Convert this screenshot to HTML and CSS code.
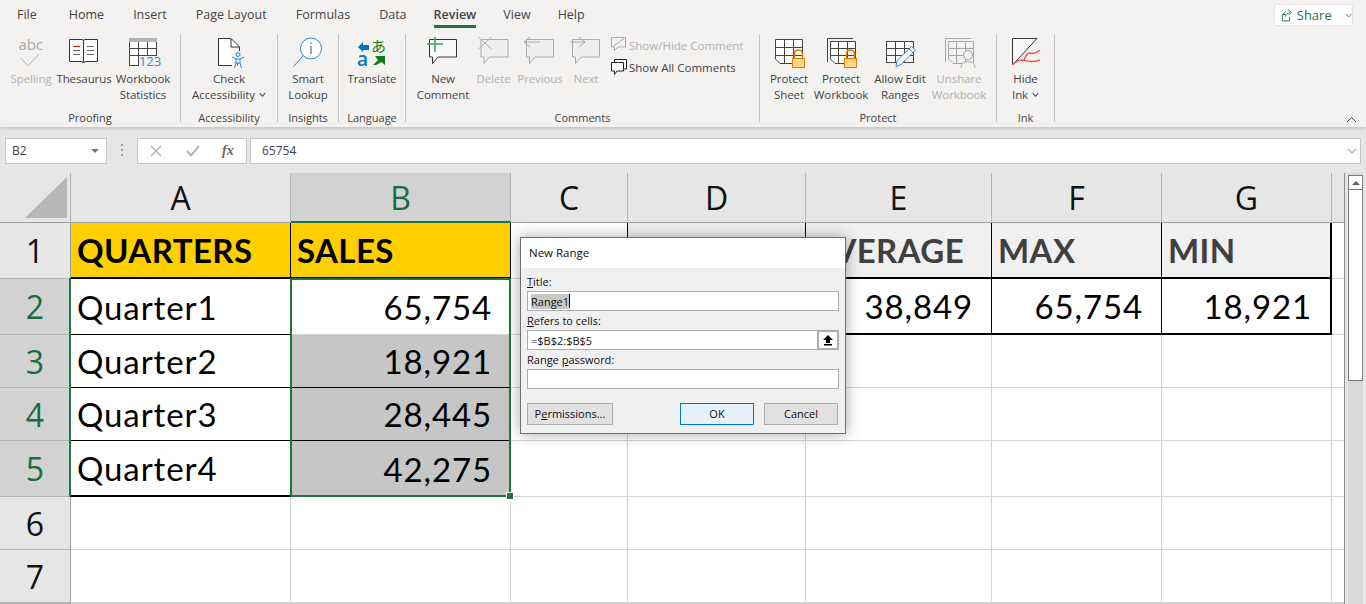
FILE: index.html
```html
<!DOCTYPE html>
<html lang="en">

<head>
	<meta charset="UTF-8">
	<title>Sales - Excel</title>
	<link rel="stylesheet" href="styles.css">
</head>

<body>

	<div class="ribbon">
		<div class="tabs">
			<span class="tab">File</span>
			<span class="tab">Home</span>
			<span class="tab">Insert</span>
			<span class="tab">Page Layout</span>
			<span class="tab">Formulas</span>
			<span class="tab">Data</span>
			<span class="tab active">Review</span>
			<span class="tab">View</span>
			<span class="tab">Help</span>
			<div class="share">
				<svg width="14" height="16" viewBox="0 0 14 16" fill="none" stroke="#217346">
					<path d="M1.5 7.5 H5 M9.5 10 V14.5 H1.5 V7.5 L5 4.5" />
					<path d="M5 10 C5 7 7 5.5 10 5.5 M8 2.5 L11.5 5 L8.5 8" />
				</svg>
				<span>Share</span>
				<svg class="share-caret" width="8" height="5" viewBox="0 0 8 5" fill="none" stroke="#217346">
					<path d="M1 1 L4 4 L7 1" />
				</svg>
			</div>
		</div>

		<div class="groups">
			<!-- Proofing -->
			<div class="group g-proofing">
				<div class="btns">
					<div class="btn off w50">
						<svg class="ico" viewBox="14 37 34 34" fill="none">
							<text x="18.5" y="50" class="ico-abc">abc</text>
							<path d="M21 58 L28 66 L39 54" stroke="#b5b5b5" />
						</svg>
						<span>Spelling</span>
					</div>
					<div class="btn w56">
						<svg class="ico" viewBox="67 37 34 34" fill="#fff" stroke="#333">
							<path d="M69.5 39.5 H82 Q83.5 39.5 83.5 41 V63 Q83 61.5 81 61.5 H69.5 Z" />
							<path d="M97.5 39.5 H85 Q83.5 39.5 83.5 41 V63 Q84 61.5 86 61.5 H97.5 Z" />
							<path d="M73 46.5 H80" stroke="#e81123" />
							<path d="M73 50.5 H80 M73 54.5 H80 M87 46.5 H94 M87 50.5 H94 M87 54.5 H94" stroke="#666" />
						</svg>
						<span>Thesaurus</span>
					</div>
					<div class="btn w62">
						<svg class="ico" viewBox="126 37 34 34" fill="none" stroke="#444">
							<rect x="129.5" y="38.5" width="27" height="27" fill="#fff" />
							<rect x="129" y="38" width="28" height="4" fill="#b3b3b3" stroke="none" />
							<path d="M138.5 42 V65 M147.5 42 V55 M130 48.5 H157 M130 55.5 H157" />
							<rect x="139" y="56" width="19" height="11" fill="#f3f2f1" stroke="none" />
							<text x="139" y="66" class="ico-num">123</text>
						</svg>
						<span>Workbook<br>Statistics</span>
					</div>
				</div>
				<div class="glabel">Proofing</div>
			</div>

			<!-- Accessibility -->
			<div class="group g-access">
				<div class="btns">
					<div class="btn grow">
						<svg class="ico" viewBox="212 37 34 34" fill="none" stroke="#333">
							<path d="M231 38.5 H218.5 V65.5 H232 M239.5 47 V51" fill="#fff" />
							<path d="M231 38.5 L239.5 47 H231 Z" fill="#fff" />
							<circle cx="238" cy="54.5" r="2" stroke="#2b88d8" />
							<path d="M232 57 L236 59 V63 L234.5 68 M244 57 L240 59 V63 L241.5 68 M236 59 H240 M236 63 H240 M237.5 63 V66" stroke="#2b88d8" />
						</svg>
						<span>Check<br>Accessibility <i class="caret"></i></span>
					</div>
				</div>
				<div class="glabel">Accessibility</div>
			</div>

			<!-- Insights -->
			<div class="group g-insights">
				<div class="btns">
					<div class="btn grow">
						<svg class="ico" viewBox="291 37 34 34" fill="none" stroke="#2b88d8">
							<circle cx="311" cy="48.5" r="10.5" fill="#fff" />
							<path d="M303 56 L293.5 66.5" />
							<path d="M311 46 V54 M311 42.5 V44" stroke="#444" />
						</svg>
						<span>Smart<br>Lookup</span>
					</div>
				</div>
				<div class="glabel">Insights</div>
			</div>

			<!-- Language -->
			<div class="group g-language">
				<div class="btns">
					<div class="btn grow">
						<svg class="ico" viewBox="355 37 34 34">
							<polygon points="358,47 363,42 363,45 369,45 369,50 363,50 363,52" fill="#0072c6" />
							<text x="357" y="65.5" class="ico-a">a</text>
							<text x="371" y="52" class="ico-kana">あ</text>
							<polygon points="385,56 385,65 381.5,62 376,65 373,65 378,60 375,56" fill="#107c10" />
						</svg>
						<span>Translate</span>
					</div>
				</div>
				<div class="glabel">Language</div>
			</div>

			<!-- Comments -->
			<div class="group g-comments">
				<div class="btns">
					<div class="btn w46">
						<svg class="ico" viewBox="426 37 34 34" fill="#fafafa" stroke="#333">
							<path d="M429.5 39.5 H456.5 V57 H438 L432.5 63.5 V57 H429.5 Z" />
							<path d="M427 44 H443 M435 37 V52" stroke="#2eaa5b" stroke-width="1.5" fill="none" />
						</svg>
						<span>New<br>Comment</span>
					</div>
					<div class="btn off w47">
						<svg class="ico" viewBox="476.5 37 34 34" fill="#efefef" stroke="#aaa">
							<path d="M480.5 39.5 H507.5 V57 H489 L483.5 63.5 V57 H480.5 Z" />
							<path d="M478 37 L491 49 M491 37 L478 49" fill="none" />
						</svg>
						<span>Delete</span>
					</div>
					<div class="btn off w46">
						<svg class="ico" viewBox="523 37 34 34" fill="#efefef" stroke="#aaa">
							<path d="M526.5 39.5 H553.5 V57 H535 L529.5 63.5 V57 H526.5 Z" />
							<path d="M524 42 H540 M530 37 L524 42 L530 47" fill="none" />
						</svg>
						<span>Previous</span>
					</div>
					<div class="btn off w46">
						<svg class="ico" viewBox="569 37 34 34" fill="#efefef" stroke="#aaa">
							<path d="M572.5 39.5 H599.5 V57 H581 L575.5 63.5 V57 H572.5 Z" />
							<path d="M570 42 H585 M579 37 L585 42 L579 47" fill="none" />
						</svg>
						<span>Next</span>
					</div>
					<div class="btn-list">
						<div class="btn-row off">
							<svg width="18" height="17" viewBox="610 37 18 17" fill="#f3f2f1" stroke="#aaa">
								<path d="M611.5 37.5 H625.5 V47 H618 L614.5 50.5 V47 H611.5 Z" />
								<path d="M613 46.5 L624 38.5" fill="none" />
							</svg>
							<span>Show/Hide Comment</span>
						</div>
						<div class="btn-row">
							<svg width="18" height="17" viewBox="609 59 18 17" fill="#fff" stroke="#222">
								<path d="M613.5 59.5 H625.5 V69 H613.5 Z" />
								<path d="M610.5 62.5 H622.5 V71 H616 L613.5 74.5 V71 H610.5 Z" />
							</svg>
							<span>Show All Comments</span>
						</div>
					</div>
				</div>
				<div class="glabel">Comments</div>
			</div>

			<!-- Protect -->
			<div class="group g-protect">
				<div class="btns">
					<div class="btn w50">
						<svg class="ico" viewBox="772 37 34 34" fill="none" stroke="#444">
							<path d="M775.5 39.5 H802.5 V63.5 H780 L775.5 59 Z" fill="#fff" />
							<path d="M784.5 40 V63 M793.5 40 V58 M776 47.5 H802 M776 55.5 H802" />
							<path d="M794.5 58 V54 C794.5 48.5 802.5 48.5 802.5 54 V58" stroke="#e07b00" stroke-width="1.5" />
							<rect x="792.5" y="58.5" width="12" height="9" fill="#fbd88a" stroke="#e07b00" />
						</svg>
						<span>Protect<br>Sheet</span>
					</div>
					<div class="btn w54">
						<svg class="ico" viewBox="824 37 34 34" fill="none" stroke="#444">
							<path d="M827.5 62 V38.5 H853" />
							<path d="M830.5 41.5 H855.5 V63.5 H835 L830.5 59 Z" fill="#fff" />
							<path d="M838.5 42 V63 M847.5 42 V58 M831 48.5 H855 M831 55.5 H855" />
							<path d="M846.5 58 V54 C846.5 48.5 854.5 48.5 854.5 54 V58" stroke="#e07b00" stroke-width="1.5" />
							<rect x="844.5" y="58.5" width="12" height="9" fill="#fbd88a" stroke="#e07b00" />
						</svg>
						<span>Protect<br>Workbook</span>
					</div>
					<div class="btn w64">
						<svg class="ico" viewBox="883 37 34 34" fill="none" stroke="#444">
							<rect x="886.5" y="41.5" width="27" height="21" fill="#fff" />
							<path d="M895.5 42 V62 M904.5 42 V62 M887 48.5 H913 M887 55.5 H913" />
							<path d="M896 66.5 L897 60.5 L911.5 46.5 L915.5 50 L901 64.5 Z" fill="#fff" stroke="#2b88d8" />
							<path d="M909 49 L913 52.5" stroke="#2b88d8" />
						</svg>
						<span>Allow Edit<br>Ranges</span>
					</div>
					<div class="btn off w54">
						<svg class="ico" viewBox="942 37 34 34" fill="none" stroke="#a6a6a6">
							<path d="M945.5 62 V38.5 H971" />
							<path d="M948.5 41.5 H973.5 V63.5 H953 L948.5 59 Z" />
							<path d="M956.5 42 V63 M965.5 42 V63 M949 48.5 H973 M949 55.5 H973" />
							<circle cx="968" cy="55" r="4.5" fill="#f3f2f1" />
							<path d="M961 67.5 C961 59.5 975 59.5 975 67.5" fill="#f3f2f1" />
						</svg>
						<span>Unshare<br>Workbook</span>
					</div>
				</div>
				<div class="glabel">Protect</div>
			</div>

			<!-- Ink -->
			<div class="group g-ink">
				<div class="btns">
					<div class="btn grow">
						<svg class="ico" viewBox="1009 37 34 34" fill="none">
							<path d="M1012.5 38.5 H1037 L1012.5 65 Z" fill="#f7f7f7" stroke="#333" />
							<path d="M1024 60 C1030 46 1030 59 1040 50" stroke="#f25555" stroke-width="1.5" />
							<path d="M1012 65 C1025 54 1025 66 1040 60" stroke="#f25555" stroke-width="1.5" />
						</svg>
						<span>Hide<br>Ink <i class="caret"></i></span>
					</div>
				</div>
				<div class="glabel">Ink</div>
			</div>
		</div>

		<svg class="collapse" width="11" height="7" viewBox="0 0 11 7" fill="none" stroke="#444">
			<path d="M1 6 L5.5 1.5 L10 6" />
		</svg>
	</div>

	<div class="formula-bar">
		<div class="name-box">
			<span>B2</span>
			<i class="name-arrow"></i>
		</div>
		<svg class="grip" width="4" height="14" viewBox="0 0 4 14" fill="#a6a6a6">
			<rect x="1" y="1" width="2" height="2" />
			<rect x="1" y="6" width="2" height="2" />
			<rect x="1" y="11" width="2" height="2" />
		</svg>
		<div class="fx-box">
			<svg width="12" height="12" viewBox="0 0 12 12" fill="none" stroke="#b4b4b4" stroke-width="1.5">
				<path d="M1 1 L11 11 M11 1 L1 11" />
			</svg>
			<svg width="14" height="12" viewBox="0 0 14 12" fill="none" stroke="#b4b4b4" stroke-width="2">
				<path d="M1 6 L5 10.5 L13 1" />
			</svg>
			<i class="fx">fx</i>
		</div>
		<div class="formula-input">
			<span>65754</span>
			<svg width="10" height="6" viewBox="0 0 10 6" fill="none" stroke="#b4b4b4" stroke-width="1.5">
				<path d="M1 1 L5 5 L9 1" />
			</svg>
		</div>
	</div>

	<div class="main">
		<div class="sheet">
			<!-- header row -->
			<div class="corner">
				<svg width="42" height="42" viewBox="0 0 42 42">
					<polygon points="0,41 42,0 42,41" fill="#b7b7b7" />
				</svg>
			</div>
			<div class="ch">A</div>
			<div class="ch sel">B</div>
			<div class="ch">C</div>
			<div class="ch">D</div>
			<div class="ch">E</div>
			<div class="ch">F</div>
			<div class="ch">G</div>
			<div class="ch-end"></div>

			<!-- row 1 -->
			<div class="rh">1</div>
			<div class="c head gold b-r b-bb">QUARTERS</div>
			<div class="c head gold b-r b-bb">SALES</div>
			<div class="c b-r"></div>
			<div class="c head pale b-r b-bb"></div>
			<div class="c head pale b-r b-bb">AVERAGE</div>
			<div class="c head pale b-r b-bb">MAX</div>
			<div class="c head pale b-rr b-bb">MIN</div>
			<div class="c"></div>

			<!-- row 2 -->
			<div class="rh sel">2</div>
			<div class="c b-r b-b">Quarter1</div>
			<div class="c num">65,754</div>
			<div class="c b-r"></div>
			<div class="c b-r b-bb"></div>
			<div class="c num b-r b-bb">38,849</div>
			<div class="c num b-r b-bb">65,754</div>
			<div class="c num b-rr b-bb">18,921</div>
			<div class="c"></div>

			<!-- row 3 -->
			<div class="rh sel">3</div>
			<div class="c b-r b-b">Quarter2</div>
			<div class="c num grey b-b">18,921</div>
			<div class="c"></div>
			<div class="c"></div>
			<div class="c"></div>
			<div class="c"></div>
			<div class="c"></div>
			<div class="c"></div>

			<!-- row 4 -->
			<div class="rh sel">4</div>
			<div class="c b-r b-b">Quarter3</div>
			<div class="c num grey b-b">28,445</div>
			<div class="c"></div>
			<div class="c"></div>
			<div class="c"></div>
			<div class="c"></div>
			<div class="c"></div>
			<div class="c"></div>

			<!-- row 5 -->
			<div class="rh sel">5</div>
			<div class="c b-r b-bb">Quarter4</div>
			<div class="c num grey">42,275</div>
			<div class="c"></div>
			<div class="c"></div>
			<div class="c"></div>
			<div class="c"></div>
			<div class="c"></div>
			<div class="c"></div>

			<!-- row 6 -->
			<div class="rh">6</div>
			<div class="c"></div>
			<div class="c"></div>
			<div class="c"></div>
			<div class="c"></div>
			<div class="c"></div>
			<div class="c"></div>
			<div class="c"></div>
			<div class="c"></div>

			<!-- row 7 -->
			<div class="rh">7</div>
			<div class="c"></div>
			<div class="c"></div>
			<div class="c"></div>
			<div class="c"></div>
			<div class="c"></div>
			<div class="c"></div>
			<div class="c"></div>
			<div class="c"></div>

			<!-- row 8, only its top shows -->
			<div class="rh"></div>
			<div class="c"></div>
			<div class="c"></div>
			<div class="c"></div>
			<div class="c"></div>
			<div class="c"></div>
			<div class="c"></div>
			<div class="c"></div>
			<div class="c"></div>

			<div class="selection"><i class="handle"></i></div>
			<div class="sel-rows"></div>
		</div>

		<div class="scrollbar">
			<div class="sb-btn"><i class="sb-arrow"></i></div>
			<div class="sb-thumb"></div>
		</div>
	</div>

	<div class="dialog">
		<div class="dlg-title">New Range</div>
		<div class="dlg-body">
			<label class="dlg-label"><u>T</u>itle:</label>
			<div class="dlg-input"><span class="hilite">Range1</span><i class="cursor"></i></div>
			<label class="dlg-label"><u>R</u>efers to cells:</label>
			<div class="dlg-input refers">
				<span>=$B$2:$B$5</span>
				<div class="pick">
					<svg width="12" height="12" viewBox="0 0 12 12">
						<path d="M6 1 L11 6 H8 V9 H4 V6 H1 Z M2 10 H10 V11.5 H2 Z" fill="#000" />
					</svg>
				</div>
			</div>
			<label class="dlg-label">Range <u>p</u>assword:</label>
			<div class="dlg-input"></div>
			<div class="dlg-actions">
				<div class="dlg-btn perm">P<u>e</u>rmissions...</div>
				<div class="dlg-btn ok">OK</div>
				<div class="dlg-btn cancel">Cancel</div>
			</div>
		</div>
	</div>

</body>

</html>
```

FILE: styles.css
```css
* {
	box-sizing: border-box;
}

html,
body {
	margin: 0;
	padding: 0;
	height: 604px;
	overflow: hidden;
}

body {
	font-family: 'Open Sans', 'Noto Sans', sans-serif;
	font-size: 11.5px;
	color: #444;
	background: #e6e6e6;
	position: relative;
}

/* ribbon */
.ribbon {
	position: relative;
	height: 127px;
	background: #f3f2f1;
	box-shadow: 0 1px 4px rgba(0, 0, 0, 0.2);
	z-index: 2;
}

.tabs {
	display: flex;
	height: 34px;
	padding-left: 17px;
	gap: 29px;
}

.tab {
	height: 28px;
	line-height: 30px;
	font-size: 12.5px;
	white-space: nowrap;
}

.tab:nth-child(2) {
	margin-left: 3px;
}

.tab:nth-child(7),
.tab:nth-child(8),
.tab:nth-child(9) {
	margin-left: -2px;
}

.tab.active {
	font-weight: 600;
	border-bottom: 3px solid #217346;
}

.share {
	display: flex;
	align-items: center;
	gap: 3px;
	height: 22px;
	width: 79px;
	margin: 4px 13px 0 auto;
	padding-left: 6px;
	background: #fff;
	border: 1px solid #e6e5e3;
	border-radius: 2px;
	color: #217346;
	font-size: 13px;
}

.share-caret {
	margin-left: 10px;
}

.groups {
	display: flex;
	height: 88px;
}

.group {
	display: flex;
	flex-direction: column;
	border-right: 1px solid #c8c6c4;
}

.g-proofing {
	width: 181px;
	padding-left: 6px;
}

.g-access {
	width: 97px;
}

.g-insights {
	width: 61px;
}

.g-language {
	width: 67px;
}

.g-comments {
	width: 354px;
	padding-left: 14px;
}

.g-protect {
	width: 237px;
	padding-left: 4px;
}

.g-ink {
	width: 58px;
}

.btns {
	display: flex;
	height: 76px;
	padding-top: 3px;
}

.btn {
	display: flex;
	flex-direction: column;
	align-items: center;
	text-align: center;
	line-height: 16px;
	letter-spacing: -0.1px;
	white-space: nowrap;
}

.btn span {
	display: block;
}

.ico {
	display: block;
	width: 34px;
	height: 34px;
	flex: none;
	overflow: visible;
}

.off {
	color: #b1b1b1;
}

.grow {
	flex: 1;
}

.w46 {
	width: 46px;
}

.w47 {
	width: 47px;
}

.w50 {
	width: 50px;
}

.w54 {
	width: 54px;
}

.w56 {
	width: 56px;
}

.w62 {
	width: 62px;
}

.w64 {
	width: 64px;
}

.g-comments .w46:first-child {
	margin-right: 4px;
}

.btn-list {
	display: flex;
	flex-direction: column;
	gap: 5px;
	margin-left: 1px;
}

.btn-row {
	display: flex;
	align-items: center;
	gap: 1px;
	height: 17px;
	white-space: nowrap;
}

.btn-row svg {
	flex: none;
}

.glabel {
	height: 12px;
	line-height: 16px;
	text-align: center;
	font-size: 11px;
	white-space: nowrap;
}

.g-proofing .glabel {
	margin-left: -6px;
}

.g-comments .glabel {
	margin-left: -14px;
}

.g-protect .glabel {
	margin-left: -4px;
}

.caret {
	display: inline-block;
	width: 5px;
	height: 5px;
	margin: 0 1px 3px 2px;
	border-right: 1px solid #444;
	border-bottom: 1px solid #444;
	transform: rotate(45deg) scale(0.9);
}

.ico-abc {
	font-size: 15px;
	fill: #a6a6a6;
	stroke: none;
}

.ico-num {
	font-size: 13px;
	fill: #2b88d8;
	stroke: none;
}

.ico-a {
	font-size: 19px;
	font-weight: 600;
	fill: #0072c6;
}

.ico-kana {
	font-family: 'Noto Sans CJK JP', sans-serif;
	font-size: 15px;
	fill: #107c10;
}

.collapse {
	position: absolute;
	right: 9px;
	bottom: 4px;
}

/* formula bar */
.formula-bar {
	display: flex;
	align-items: center;
	height: 46px;
	padding: 0 5px 0 5px;
	background: #e6e6e6;
}

.name-box,
.fx-box,
.formula-input {
	display: flex;
	align-items: center;
	height: 26px;
	background: #fff;
	border: 1px solid #c6c6c6;
	font-size: 12px;
	margin-top: 1px;
}

.name-box {
	width: 102px;
	padding: 0 6px;
	justify-content: space-between;
}

.name-arrow {
	width: 0;
	height: 0;
	margin-right: 1px;
	border-left: 4px solid transparent;
	border-right: 4px solid transparent;
	border-top: 4px solid #767676;
}

.grip {
	margin: 0 13px 0 13px;
}

.fx-box {
	width: 110px;
	padding-left: 12px;
}

.fx-box svg + svg {
	margin-left: 24px;
}

.fx {
	margin-left: 22px;
	font-family: 'Liberation Serif', serif;
	font-size: 14px;
	font-weight: 700;
	color: #666;
}

.formula-input {
	flex: 1;
	margin-left: 3px;
	padding: 0 3px 0 11px;
	justify-content: space-between;
}

/* sheet */
.main {
	display: flex;
	height: 431px;
}

.sheet {
	position: relative;
	flex: 1;
	display: grid;
	grid-template-columns: 71px 220px 220px 117px 178px 186px 170px 170px 13px;
	grid-template-rows: 50px 56px 56px 53px 53px 56px 53px 53px 1fr;
	background: #fff;
	overflow: hidden;
}

.corner {
	display: flex;
	align-items: flex-end;
	justify-content: flex-end;
	padding: 0 3px 3px 0;
	background: #e6e6e6;
	border-right: 1px solid #b4b4b4;
	border-bottom: 1px solid #9f9f9f;
}

.ch,
.rh {
	display: flex;
	align-items: center;
	justify-content: center;
	background: #e6e6e6;
	color: #111;
	font-size: 32px;
}

.ch {
	border-right: 1px solid #b4b4b4;
	border-bottom: 1px solid #9f9f9f;
}

.ch.sel {
	background: #d2d2d2;
	color: #1d6b41;
	border-bottom: 2px solid #217346;
}

.ch-end {
	background: #e6e6e6;
	border-bottom: 1px solid #9f9f9f;
}

.rh {
	border-right: 1px solid #9f9f9f;
	border-bottom: 1px solid #b4b4b4;
}

.rh.sel {
	background: #d2d2d2;
	color: #1d6b41;
}

.c {
	display: flex;
	align-items: center;
	padding-left: 6px;
	border-right: 1px solid #d4d4d4;
	border-bottom: 1px solid #d4d4d4;
	color: #000;
	font-family: 'Lato', 'Open Sans', sans-serif;
	font-size: 33px;
	letter-spacing: 0.9px;
	white-space: nowrap;
	overflow: hidden;
}

.head {
	font-weight: 700;
	letter-spacing: 0.4px;
}

.gold {
	background: #ffd000;
}

.pale {
	background: #f0f0f0;
	color: #404040;
}

.num {
	justify-content: flex-end;
	padding-right: 18px;
}

.grey {
	background: #c6c6c6;
}

.b-r {
	border-right: 1px solid #000;
}

.b-rr {
	border-right: 2px solid #000;
}

.b-b {
	border-bottom: 1px solid #000;
}

.b-bb {
	border-bottom: 2px solid #000;
}

.selection {
	position: absolute;
	left: 290px;
	top: 105px;
	width: 221px;
	height: 219px;
	border: 2px solid #217346;
}

.handle {
	position: absolute;
	right: -4px;
	bottom: -4px;
	width: 6px;
	height: 6px;
	background: #217346;
	border: 1px solid #fff;
	box-sizing: content-box;
	margin: -1px;
}

.sel-rows {
	position: absolute;
	left: 69px;
	top: 105px;
	width: 2px;
	height: 219px;
	background: #217346;
}

.scrollbar {
	flex: none;
	width: 22px;
	padding: 2px 3px 0 4px;
	background: linear-gradient(90deg, #8a8a8a 1px, #e6e6e6 1px, #e6e6e6 4px, #d9d9d9 4px, #d9d9d9 19px, #e6e6e6 19px);
}

.sb-btn {
	display: flex;
	align-items: center;
	justify-content: center;
	height: 15px;
	background: #fff;
	border: 1px solid #7a7a7a;
}

.sb-arrow {
	width: 0;
	height: 0;
	border-left: 4px solid transparent;
	border-right: 4px solid transparent;
	border-bottom: 4px solid #666;
}

.sb-thumb {
	height: 191px;
	background: #fff;
	border: 1px solid #7a7a7a;
	border-top: none;
}

/* dialog */
.dialog {
	position: absolute;
	left: 520px;
	top: 237px;
	width: 326px;
	height: 197px;
	background: #f0f0f0;
	border: 1px solid #707070;
	box-shadow: 0 0 14px rgba(0, 0, 0, 0.35);
	color: #111;
	font-size: 11px;
	z-index: 3;
}

.dlg-title {
	height: 30px;
	padding-left: 8px;
	line-height: 30px;
	font-size: 11.5px;
	background: #fff;
}

.dlg-body {
	display: flex;
	flex-direction: column;
	padding: 5px 6px 0 6px;
}

.dlg-label {
	display: block;
	height: 18px;
	line-height: 18px;
}

.dlg-input {
	display: flex;
	align-items: center;
	height: 20px;
	margin-bottom: 1px;
	padding-left: 3px;
	background: #fff;
	border: 1px solid #adadad;
}

.hilite {
	background: #c8c8c8;
}

.cursor {
	width: 1px;
	height: 14px;
	background: #000;
}

.refers {
	justify-content: space-between;
	padding-right: 0;
}

.pick {
	display: flex;
	align-items: center;
	justify-content: center;
	width: 22px;
	height: 20px;
	margin-right: -1px;
	background: #fff;
	border: 2px solid #adadad;
}

.dlg-actions {
	display: flex;
	margin-top: 13px;
}

.dlg-btn {
	display: flex;
	align-items: center;
	justify-content: center;
	height: 22px;
	padding-bottom: 2px;
	background: #e1e1e1;
	border: 1px solid #adadad;
}

.perm {
	width: 86px;
}

.ok {
	width: 74px;
	margin-left: auto;
	background: #e5f1fb;
	border-color: #0078d7;
}

.cancel {
	width: 74px;
	margin: 0 1px 0 10px;
}
```
